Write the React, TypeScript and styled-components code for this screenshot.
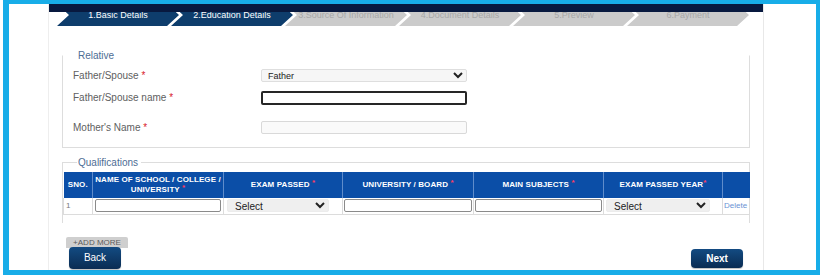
import styled, { createGlobalStyle } from "styled-components";

const steps = [
  "1.Basic Details",
  "2.Education Details",
  "3.Source Of Information",
  "4.Document Details",
  "5.Preview",
  "6.Payment",
];

const GlobalStyle = createGlobalStyle`
  html, body {
    margin: 0;
    padding: 0;
    background: #ffffff;
  }
  body {
    font-family: "Liberation Sans", Arial, sans-serif;
  }
  * {
    box-sizing: border-box;
  }
`;

function App() {
  return (
    <>
      <GlobalStyle />
      <Frame>
        <SideGutter $side="left" />
        <Main>
          <Steps>
            <TopStrip />
            <TabRow>
              {steps.map((s, i) => (
                <Tab key={s} $active={i < 2}>
                  {s}
                </Tab>
              ))}
            </TabRow>
          </Steps>

          <Fieldset>
            <Legend $indent={4}>Relative</Legend>
            <FormRow>
              <Label>
                Father/Spouse <Req>*</Req>
              </Label>
              <Select defaultValue="Father">
                <option>Father</option>
                <option>Spouse</option>
              </Select>
            </FormRow>
            <FormRow $mt={9}>
              <Label>
                Father/Spouse name <Req>*</Req>
              </Label>
              <TextInput $focus />
            </FormRow>
            <FormRow $mt={17}>
              <Label>
                Mother's Name <Req>*</Req>
              </Label>
              <TextInput />
            </FormRow>
          </Fieldset>

          <QualFieldset>
            <Legend $indent={14}>Qualifications</Legend>
            <Table>
              <colgroup>
                <col style={{ width: 29 }} />
                <col style={{ width: 131 }} />
                <col style={{ width: 119 }} />
                <col style={{ width: 131 }} />
                <col style={{ width: 130 }} />
                <col style={{ width: 119 }} />
                <col style={{ width: 27 }} />
              </colgroup>
              <thead>
                <tr>
                  <Th>SNO.</Th>
                  <Th>
                    NAME OF SCHOOL / COLLEGE /<br />
                    UNIVERSITY <HeadReq>*</HeadReq>
                  </Th>
                  <Th>
                    EXAM PASSED <HeadReq>*</HeadReq>
                  </Th>
                  <Th>
                    UNIVERSITY / BOARD <HeadReq>*</HeadReq>
                  </Th>
                  <Th>
                    MAIN SUBJECTS <HeadReq>*</HeadReq>
                  </Th>
                  <Th>
                    EXAM PASSED YEAR<HeadReq>*</HeadReq>
                  </Th>
                  <Th />
                </tr>
              </thead>
              <tbody>
                <tr>
                  <Td>1</Td>
                  <Td>
                    <CellInput />
                  </Td>
                  <Td $pad={3}>
                    <CellSelect $w={102} defaultValue="Select">
                      <option>Select</option>
                    </CellSelect>
                  </Td>
                  <Td $pad={1}>
                    <CellInput />
                  </Td>
                  <Td $pad={1}>
                    <CellInput />
                  </Td>
                  <Td $pad={2}>
                    <CellSelect $w={104} defaultValue="Select">
                      <option>Select</option>
                    </CellSelect>
                  </Td>
                  <Td $pad={1}>
                    <DeleteLink>Delete</DeleteLink>
                  </Td>
                </tr>
              </tbody>
            </Table>
          </QualFieldset>

          <Footer>
            <FooterLeft>
              <AddMore>+ADD MORE</AddMore>
              <NavButton>Back</NavButton>
            </FooterLeft>
            <NavButton $bold $next>
              Next
            </NavButton>
          </Footer>
        </Main>
        <SideGutter $side="right" />
      </Frame>
    </>
  );
}

export default App;

const Frame = styled.div`
  margin-left: 3px;
  width: 817px;
  height: 275px;
  border-style: solid;
  border-color: #18ade8;
  border-width: 4px 4px 5px 6px;
  display: flex;
  background: #ffffff;
`;

const SideGutter = styled.div<{ $side: "left" | "right" }>`
  flex: none;
  width: ${(p) => (p.$side === "left" ? "40px" : "53px")};
  ${(p) =>
    p.$side === "left"
      ? "border-right: 1px solid #eeeeee;"
      : "border-left: 1px solid #e8e8e8;"}
`;

const Main = styled.div`
  flex: none;
  width: 714px;
  display: flex;
  flex-direction: column;
`;

const Steps = styled.div`
  position: relative;
  height: 22px;
`;

const TopStrip = styled.div`
  position: absolute;
  top: 0;
  left: 0;
  right: 0;
  height: 8px;
  background: #08193f;
  z-index: 1;
`;

const TabRow = styled.div`
  display: flex;
  padding-left: 8px;
  height: 22px;
`;

const Tab = styled.div<{ $active?: boolean }>`
  flex: none;
  width: 122px;
  height: 22px;
  margin-right: -8px;
  padding: 0 12px;
  clip-path: polygon(0 0, 110px 0, 122px 50%, 110px 100%, 0 100%, 12px 50%);
  background: ${(p) => (p.$active ? "#0e3d6c" : "#cbcbcb")};
  color: ${(p) => (p.$active ? "#ffffff" : "#a8a8a8")};
  display: flex;
  align-items: center;
  justify-content: center;
  font-size: 9px;
  white-space: nowrap;
`;

const Fieldset = styled.fieldset`
  margin: 24px 13px 0 13px;
  padding: 8px 0 13px 10px;
  min-width: 0;
  border: 1px solid #dddddd;
  border-top-color: transparent;
`;

const QualFieldset = styled.fieldset`
  margin: 9px 13px 0 13px;
  padding: 4px 0 8px 0;
  min-width: 0;
  border: 1px solid #dddddd;
  border-bottom: none;
`;

const Legend = styled.legend<{ $indent: number }>`
  font-size: 10px;
  line-height: 11px;
  color: #4d6d94;
  padding: 0 3px 0 1px;
  margin-left: ${(p) => p.$indent}px;
`;

const FormRow = styled.div<{ $mt?: number }>`
  display: flex;
  align-items: center;
  height: 13px;
  margin-top: ${(p) => p.$mt ?? 0}px;
`;

const Label = styled.div`
  width: 188px;
  flex: none;
  font-size: 10px;
  color: #606060;
`;

const Req = styled.span`
  color: #d8202a;
`;

const Select = styled.select`
  width: 206px;
  height: 13px;
  padding: 0 2px;
  font-family: "Liberation Sans", Arial, sans-serif;
  font-size: 9px;
  color: #222222;
  background: #f6f6f6;
  border: 1px solid #dedede;
  border-radius: 2px;
`;

const TextInput = styled.input<{ $focus?: boolean }>`
  width: 206px;
  height: ${(p) => (p.$focus ? "14px" : "13px")};
  padding: 0 3px;
  background: ${(p) => (p.$focus ? "#ffffff" : "#fafafa")};
  border: ${(p) => (p.$focus ? "2px solid #262626" : "1px solid #d9d9d9")};
  border-radius: 2px;
  outline: none;
`;

const Table = styled.table`
  width: 100%;
  table-layout: fixed;
  border-collapse: collapse;
`;

const Th = styled.th`
  height: 26px;
  padding: 0 2px;
  background: #0b4ea7;
  border-right: 1px solid #5f8ccb;
  color: #ffffff;
  font-size: 8px;
  letter-spacing: 0.1px;
  line-height: 10px;
  font-weight: bold;
  text-align: center;
  vertical-align: middle;
  white-space: nowrap;
  &:last-child {
    border-right: none;
  }
`;

const HeadReq = styled.span`
  color: #ff3d61;
  font-size: 8px;
  position: relative;
  top: -2px;
`;

const Td = styled.td<{ $pad?: number }>`
  height: 16px;
  padding: 0 ${(p) => p.$pad ?? 2}px;
  border: 1px solid #dcdcdc;
  border-top: none;
  vertical-align: middle;
  font-size: 8px;
  color: #7a7a7a;
  text-align: left;
`;

const CellInput = styled.input`
  display: block;
  width: 100%;
  height: 13px;
  padding: 0 3px;
  border: 1px solid #8a8a8a;
  border-radius: 2px;
  background: #ffffff;
  outline: none;
`;

const CellSelect = styled.select<{ $w: number }>`
  display: block;
  width: ${(p) => p.$w}px;
  height: 13px;
  padding: 0 3px;
  font-family: "Liberation Sans", Arial, sans-serif;
  font-size: 10px;
  color: #222222;
  background: #efefef;
  border: 1px solid #ececec;
  border-radius: 2px;
`;

const DeleteLink = styled.a`
  font-size: 8px;
  color: #6a92d4;
  cursor: pointer;
`;

const Footer = styled.div`
  margin-top: 14px;
  display: flex;
  justify-content: space-between;
  align-items: flex-end;
  padding: 0 20px 0 17px;
`;

const FooterLeft = styled.div`
  display: flex;
  flex-direction: column;
  align-items: flex-start;
`;

const AddMore = styled.button`
  width: 62px;
  height: 11px;
  padding: 0;
  border: none;
  border-radius: 2px 2px 0 0;
  background: #cfcfcf;
  color: #5c5c5c;
  font-family: "Liberation Sans", Arial, sans-serif;
  font-size: 8px;
  line-height: 11px;
`;

const NavButton = styled.button<{ $bold?: boolean; $next?: boolean }>`
  width: 52px;
  height: ${(p) => (p.$next ? "19px" : "22px")};
  margin: ${(p) => (p.$next ? "0 0 1px 0" : "-1px 0 0 3px")};
  padding: 0;
  border: none;
  border-radius: 4px;
  background: linear-gradient(#134b82, #0a2c53);
  color: #ffffff;
  font-family: "Liberation Sans", Arial, sans-serif;
  font-size: 10px;
  font-weight: ${(p) => (p.$bold ? "bold" : "normal")};
  box-shadow: 0 1px 1px rgba(0, 0, 0, 0.25);
`;
